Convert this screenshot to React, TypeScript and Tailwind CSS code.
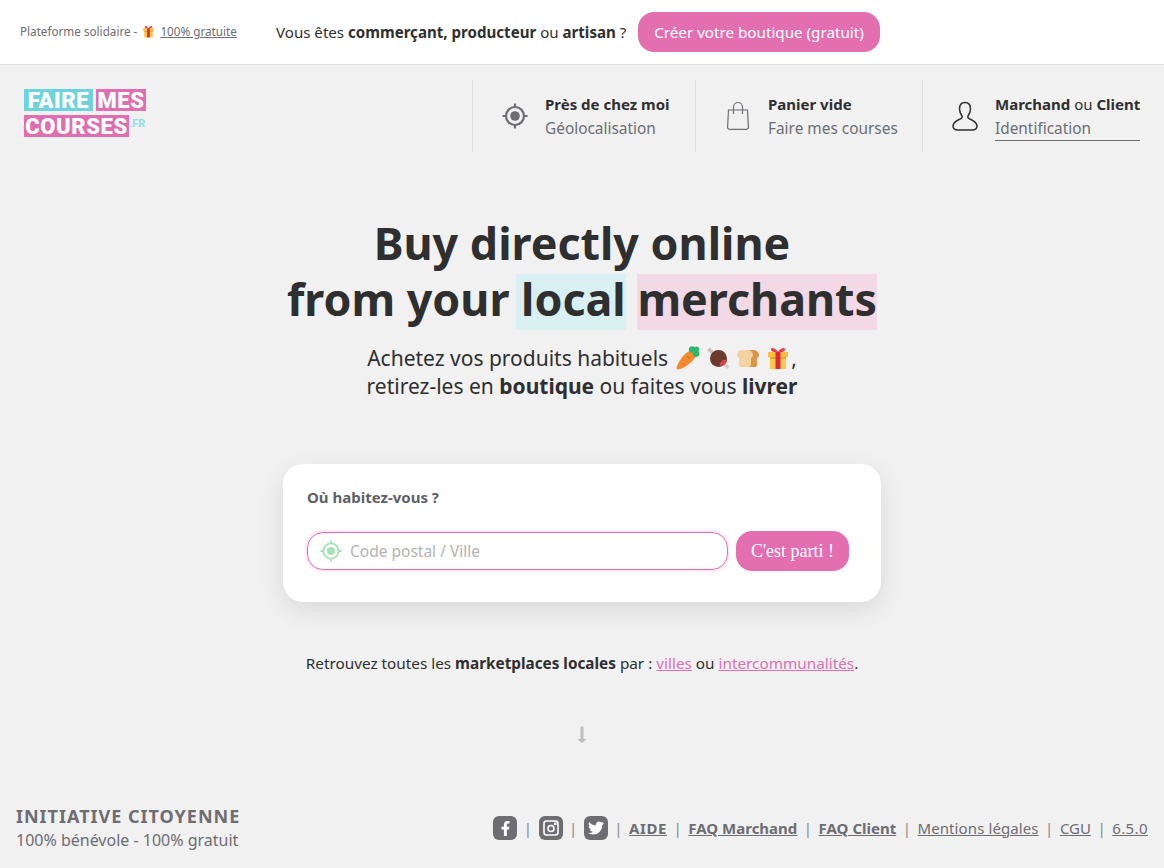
import React from "react";
import { FaFacebookF, FaTwitter } from "react-icons/fa";

function TargetIcon({ className }: { className?: string }) {
  return (
    <svg viewBox="0 0 26 26" fill="none" stroke="currentColor" className={className}>
      <circle cx="13" cy="13" r="9" strokeWidth="2.2" />
      <circle cx="13" cy="13" r="4.8" fill="currentColor" stroke="none" />
      <path d="M13 0.5v4M13 21.5v4M0.5 13h4M21.5 13h4" strokeWidth="2.2" />
    </svg>
  );
}

function BagIcon() {
  return (
    <svg viewBox="0 0 24 30" fill="none" stroke="#6d6d72" strokeWidth="1.2" className="w-6 h-[30px]">
      <path d="M2.500 9h19l.9 17a2.200 2.200 0 0 1-2.200 2.400H3.800a2.200 2.200 0 0 1-2.200-2.400L2.500 9z" />
      <path d="M7.500 13V6a4.500 4.500 0 0 1 9 0v7" />
    </svg>
  );
}

function UserIcon() {
  return (
    <svg viewBox="0 0 26 30" fill="none" stroke="#2f2f2f" strokeWidth="1.5" className="w-[26px] h-[30px]">
      <path d="M13 1.500c-3.600 0-5.500 2.800-5.500 6.500 0 3 1.500 5.500 2.500 7 .5 1 0 2-1.500 2.800C5 19.500 1 21 1 25c0 2.500 2 4 5 4h14c3 0 5-1.500 5-4 0-4-4-5.500-7.500-7.200-1.500-.8-2-1.800-1.500-2.800 1-1.500 2.500-4 2.500-7 0-3.700-1.900-6.500-5.500-6.500z" />
    </svg>
  );
}

function GiftEmoji({ className }: { className?: string }) {
  return (
    <svg viewBox="0 0 24 24" className={className}>
      <path d="M12 6C9 1 4 1 5 4c.6 2 4 2.500 7 2zM12 6c3-5 8-5 7-2-.6 2-4 2.500-7 2z" fill="#e8404f" />
      <rect x="2" y="6" width="20" height="5" fill="#fbbf3c" />
      <rect x="4" y="11" width="16" height="12" fill="#fcc94d" />
      <rect x="4" y="11" width="16" height="2" fill="#e9a52a" />
      <rect x="9.500" y="6" width="5" height="17" fill="#d9293e" />
    </svg>
  );
}

function CarrotEmoji() {
  return (
    <svg viewBox="0 0 24 24" className="w-6 h-6">
      <path d="M14 5c3.500-.5 6 2.500 5.500 5.500C18.500 15 8 22.500 2.500 23.500c-1.500.3-2.200-.5-1.900-2C2 16 9 6 14 5z" fill="#f58a2e" />
      <path d="M6 17l3 2M11 10l3 2.500" stroke="#d96a17" strokeWidth="1" />
      <circle cx="16" cy="3.500" r="3.200" fill="#2fb768" />
      <circle cx="20" cy="7.500" r="3.400" fill="#2fb768" />
      <circle cx="20.500" cy="3" r="2.600" fill="#2fb768" />
    </svg>
  );
}

function MeatEmoji() {
  return (
    <svg viewBox="0 0 24 24" className="w-6 h-6">
      <path d="M1 4l3-2.500 8 8-3 3z" fill="#c9c5c0" />
      <path d="M16 18l5 5 2.500-2.500-5-5z" fill="#d4cfca" />
      <circle cx="12.500" cy="12.500" r="8.500" fill="#6b3a2a" />
      <path d="M15 20.500a8.500 8.500 0 0 0 6-6l-3.500-1-4 4z" fill="#d9444f" />
    </svg>
  );
}

function BreadEmoji() {
  return (
    <svg viewBox="0 0 24 24" className="w-6 h-6">
      <path d="M1 9c0-3 3-5 6-5h10c3 0 6 2 6 5 0 1.500-1 2.500-2 3v7c0 1-1 2-2 2H5c-1 0-2-1-2-2v-7c-1-.5-2-1.500-2-3z" fill="#f3d3a3" />
      <path d="M13 4h4c3 0 6 2 6 5 0 1.500-1 2.500-2 3v7c0 1-1 2-2 2h-6c1.500-1 2-2 2-3v-6c1-.5 2-1.500 2-3 0-2.500-2-4.500-4-5z" fill="#dc9645" />
    </svg>
  );
}

function InstagramIcon() {
  return (
    <svg viewBox="0 0 16 16" fill="none" stroke="white" className="w-4 h-4">
      <rect x="1" y="1" width="14" height="14" rx="2.500" strokeWidth="1.600" />
      <circle cx="8" cy="8.500" r="3" strokeWidth="1.600" />
      <rect x="11" y="2.500" width="2.500" height="2.500" fill="white" stroke="none" />
    </svg>
  );
}

function NavItem(props: { width: string; pad: string; icon: React.ReactNode; title: React.ReactNode; sub: string; underline?: boolean }) {
  return (
    <div className={`${props.width} ${props.pad} h-[72px] border-l border-[#dfdfe3] flex items-center`}>
      {props.icon}
      <div className={props.underline ? "border-b border-[#6d6d72] h-[49px] mt-px flex-1" : "h-[49px] mt-px flex-1"}>
        <div className="text-[15px] leading-6 text-[#2f2f2f] whitespace-nowrap">{props.title}</div>
        <div className="text-[15.4px] leading-6 mt-px text-[#6d6d72] whitespace-nowrap">{props.sub}</div>
      </div>
    </div>
  );
}

function Sep() {
  return <span className="text-[#8a8a8e]">|</span>;
}

export default function App() {
  return (
    <div className="h-[868px] overflow-hidden flex flex-col bg-[#f1f1f2] text-[#2f2f2f] font-['Noto_Sans',sans-serif]">
      {/* top banner */}
      <div className="h-[65px] shrink-0 bg-white border-b border-[#dfdfe3] flex items-center pl-5">
        <div className="w-[256px] text-[11.7px] text-[#6d6d72] flex items-center whitespace-nowrap">
          Plateforme solidaire -
          <GiftEmoji className="w-[13px] h-[13px] mx-[5px]" />
          <span className="underline">100% gratuite</span>
        </div>
        <div className="w-[362px] text-[15.1px] whitespace-nowrap">
          Vous êtes <b>commerçant, producteur</b> ou <b>artisan</b> ?
        </div>
        <div className="h-10 w-[242px] rounded-2xl bg-[#e46fb0] text-white text-[15.2px] flex items-center justify-center whitespace-nowrap">
          Créer votre boutique (gratuit)
        </div>
      </div>

      {/* header */}
      <div className="flex justify-between pt-[15px] shrink-0">
        <div className="ml-6 mt-[9px] w-[122px] font-['Roboto',sans-serif] font-black text-[22px] leading-6 tracking-[0.6px] text-white">
          <div className="flex gap-[3px]">
            <span className="w-[69px] h-[22px] bg-[#6fd3dd] text-center">FAIRE</span>
            <span className="w-[50px] h-[22px] bg-[#df6fb0] text-center">MES</span>
          </div>
          <div className="flex mt-1">
            <span className="w-[105px] h-[22px] bg-[#df6fb0] text-center whitespace-nowrap">COURSES</span>
            <span className="font-bold text-[11px] tracking-normal leading-[18px] text-[#8fdde5]">.FR</span>
          </div>
        </div>
        <div className="flex">
          <NavItem
            width="w-[223px]"
            pad="pl-[29px] pr-6"
            icon={<TargetIcon className="w-[26px] h-[26px] text-[#6d6d72] mr-[17px] shrink-0" />}
            title={<b>Près de chez moi</b>}
            sub="Géolocalisation"
          />
          <NavItem
            width="w-[227px]"
            pad="pl-[30px] pr-6"
            icon={<span className="mr-[18px] shrink-0"><BagIcon /></span>}
            title={<b>Panier vide</b>}
            sub="Faire mes courses"
          />
          <NavItem
            width="w-[242px]"
            pad="pl-[29px] pr-6"
            underline
            icon={<span className="mr-[17px] shrink-0"><UserIcon /></span>}
            title={<><b>Marchand</b> ou <b>Client</b></>}
            sub="Identification"
          />
        </div>
      </div>

      {/* hero */}
      <div className="flex flex-col items-center mt-[63px]">
        <h1 className="text-[44.8px] leading-[56px] font-bold text-center text-[#2f2f2f]">
          Buy directly online
          <br />
          from your <span className="inline-block h-14 leading-[50px] -ml-[5px] pl-[5px] bg-[#d9f0f3]">local</span>{" "}
          <span className="inline-block h-14 leading-[50px] bg-[#f3d8e6]">merchants</span>
        </h1>
        <div className="mt-[14px] text-[21px] leading-7 text-center">
          <div className="flex items-center justify-center">
            Achetez vos produits habituels
            <span className="flex gap-[6px] ml-[8px] mr-[1px]">
              <CarrotEmoji />
              <MeatEmoji />
              <BreadEmoji />
              <GiftEmoji className="w-6 h-6" />
            </span>
            ,
          </div>
          <div>
            retirez-les en <b>boutique</b> ou faites vous <b>livrer</b>
          </div>
        </div>

        {/* search card */}
        <div className="mt-[64px] w-[598px] h-[138px] bg-white rounded-[20px] px-6 pt-[22px] shadow-[0_8px_24px_rgba(0,0,0,0.1)]">
          <div className="text-[15px] leading-[22px] font-bold text-[#5f5f64]">Où habitez-vous ?</div>
          <div className="flex items-center gap-2 mt-[23px]">
            <div className="w-[421px] h-[38px] rounded-2xl border border-[#e46fb0] shadow-[0_0_4px_rgba(228,111,176,0.4)] flex items-center px-3">
              <TargetIcon className="w-[22px] h-[22px] text-[#a5e3b5] mr-2 shrink-0" />
              <span className="pt-px text-[15.5px] text-[#b3b3b3]">Code postal / Ville</span>
            </div>
            <div className="w-[113px] h-10 pt-px rounded-2xl bg-[#e46fb0] text-white text-[18px] flex items-center justify-center font-['Liberation_Serif',serif]">
              C'est parti !
            </div>
          </div>
        </div>

        <div className="mt-[49px] text-[15.3px] leading-6 text-center">
          Retrouvez toutes les <b>marketplaces locales</b> par :{" "}
          <span className="underline text-[#df6fb0]">villes</span> ou{" "}
          <span className="underline text-[#df6fb0]">intercommunalités</span>.
        </div>

        <svg viewBox="0 0 12 18" className="w-3 h-[18px] mt-[51px] text-[#bdbdbd]">
          <path d="M6 0.500v14" stroke="currentColor" strokeWidth="3" />
          <path d="M1.500 13H10.500L6 17z" fill="currentColor" />
        </svg>
      </div>

      {/* footer */}
      <div className="mt-auto px-4 pb-4 flex items-center justify-between">
        <div>
          <div className="text-[18px] leading-6 font-bold text-[#6d6d72] tracking-[0.055em]">INITIATIVE CITOYENNE</div>
          <div className="text-base leading-6 text-[#6d6d72]">100% bénévole - 100% gratuit</div>
        </div>
        <div className="flex items-center gap-[6.5px] text-[15px] text-[#6d6d72] whitespace-nowrap">
          <span className="w-6 h-6 rounded-[6px] bg-[#6d6d72] flex items-center justify-center text-white"><FaFacebookF size={15} /></span>
          <Sep />
          <span className="w-6 h-6 rounded-[6px] bg-[#6d6d72] flex items-center justify-center"><InstagramIcon /></span>
          <Sep />
          <span className="w-6 h-6 rounded-[6px] bg-[#6d6d72] flex items-center justify-center text-white"><FaTwitter size={16} /></span>
          <Sep />
          <b className="underline tracking-[0.6px]">AIDE</b>
          <Sep />
          <b className="underline">FAQ Marchand</b>
          <Sep />
          <b className="underline">FAQ Client</b>
          <Sep />
          <span className="underline tracking-[0.1px]">Mentions légales</span>
          <Sep />
          <span className="underline">CGU</span>
          <Sep />
          <span className="underline tracking-[0.4px]">6.5.0</span>
        </div>
      </div>
    </div>
  );
}
